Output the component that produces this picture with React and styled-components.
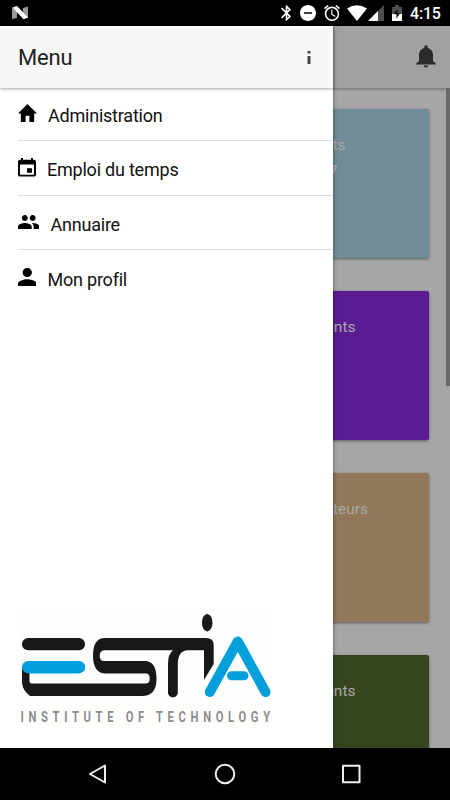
import styled, { createGlobalStyle } from 'styled-components';

const menuItems = [
  {
    label: 'Administration',
    viewBox: '2 3 20 17',
    width: 19,
    height: 18,
    path: 'M10 20v-6h4v6h5v-8h3L12 3 2 12h3v8z',
  },
  {
    label: 'Emploi du temps',
    viewBox: '3 1 18 20',
    width: 18,
    height: 18.5,
    path: 'M17 12h-5v5h5v-5zM16 1v2H8V1H6v2H5c-1.11 0-1.99.9-1.99 2L3 19a2 2 0 002 2h14c1.1 0 2-.9 2-2V5c0-1.1-.9-2-2-2h-1V1h-2zm3 18H5V8h14v11z',
  },
  {
    label: 'Annuaire',
    viewBox: '1 5 22 14',
    width: 21.5,
    height: 14,
    path: 'M16 11c1.66 0 2.99-1.34 2.99-3S17.66 5 16 5c-1.66 0-3 1.34-3 3s1.34 3 3 3zm-8 0c1.66 0 2.99-1.34 2.99-3S9.66 5 8 5C6.34 5 5 6.34 5 8s1.34 3 3 3zm0 2c-2.33 0-7 1.17-7 3.5V19h14v-2.5c0-2.33-4.67-3.5-7-3.5zm8 0c-.29 0-.62.02-.97.05 1.16.84 1.97 1.97 1.97 3.45V19h6v-2.5c0-2.33-4.67-3.5-7-3.5z',
  },
  {
    label: 'Mon profil',
    viewBox: '4 4 16 16',
    width: 18.5,
    height: 18,
    path: 'M12 12c2.21 0 4-1.79 4-4s-1.79-4-4-4-4 1.79-4 4 1.79 4 4 4zm0 2c-2.67 0-8 1.34-8 4v2h16v-2c0-2.66-5.33-4-8-4z',
  },
];

const cards = [
  { title: 'ts', count: '7', color: '#add8e6', inset: 83 },
  { title: 'ants', color: '#8a2be2', inset: 73 },
  { title: 'teurs', color: '#deb887', inset: 60.5 },
  { title: 'ents', color: '#556b2f', inset: 73 },
];

export default function App() {
  return (
    <>
      <GlobalStyle />
      <Phone>
        <StatusBar />
        <Screen>
          <Page>
            <PageHeader>
              <BellIcon />
            </PageHeader>
            <CardList>
              {cards.map((card) => (
                <Card key={card.title} $color={card.color} $inset={card.inset}>
                  <CardTitle>{card.title}</CardTitle>
                  {card.count && <CardCount>{card.count}</CardCount>}
                </Card>
              ))}
            </CardList>
          </Page>
          <Scrim />
          <ScrollThumb />
          <Drawer>
            <DrawerHeader>
              <DrawerTitle>Menu</DrawerTitle>
              <svg width="4" height="13" viewBox="0 0 4 13" fill="#444">
                <path d="M.5 0h3v2.5h-3zM.5 5h3v8h-3z" />
              </svg>
            </DrawerHeader>
            <MenuList>
              {menuItems.map((item) => (
                <MenuItem key={item.label}>
                  <MenuIcon
                    viewBox={item.viewBox}
                    width={item.width}
                    height={item.height}
                    preserveAspectRatio="none"
                  >
                    <path d={item.path} />
                  </MenuIcon>
                  <MenuLabel>{item.label}</MenuLabel>
                </MenuItem>
              ))}
            </MenuList>
            <EstiaLogo />
          </Drawer>
        </Screen>
        <NavigationBar />
      </Phone>
    </>
  );
}

function StatusBar() {
  return (
    <StatusRow>
      <svg width="17" height="14" viewBox="0 0 17 14">
        <path d="M0 1.5L5 5v7L0 13z" fill="#999" />
        <path d="M11 2l5-1.5v12L11 8z" fill="#999" />
        <path d="M.5 1.5L5 0l11 11.5-4.500 1.800z" fill="#fff" />
      </svg>
      <StatusIcons>
        <svg width="10" height="16" viewBox="5 2 12.7 20" fill="#fff">
          <path d="M17.71 7.71L12 2h-1v7.59L6.41 5 5 6.41 10.59 12 5 17.59 6.41 19 11 14.41V22h1l5.71-5.71-4.3-4.29 4.3-4.29zM13 5.83l1.88 1.88L13 9.59V5.83zm1.88 10.46L13 18.17v-3.76l1.88 1.88z" />
        </svg>
        <svg width="16" height="16" viewBox="2 2 20 20" fill="#fff">
          <path d="M12 2C6.48 2 2 6.48 2 12s4.48 10 10 10 10-4.48 10-10S17.52 2 12 2zm5 11H7v-2h10v2z" />
        </svg>
        <svg width="16" height="16" viewBox="2 2 20 20" fill="#fff">
          <path d="M22 5.72l-4.6-3.86-1.29 1.53 4.6 3.86L22 5.72zM7.88 3.39L6.6 1.86 2 5.71l1.29 1.53 4.59-3.85zM12.5 8H11v6l4.75 2.85.75-1.23-4-2.37V8zM12 4c-4.97 0-9 4.03-9 9s4.02 9 9 9a9 9 0 000-18zm0 16c-3.87 0-7-3.13-7-7s3.13-7 7-7 7 3.13 7 7-3.13 7-7 7z" />
        </svg>
        <svg width="20" height="16" viewBox="0 0 20 16">
          <path d="M0 3.5Q10-3 20 3.5L10 16z" fill="#fff" />
        </svg>
        <svg width="16" height="16" viewBox="0 0 16 16">
          <path d="M16 0v16H0z" fill="#4d4d4d" />
          <path d="M10 6v10H0z" fill="#fff" />
        </svg>
        <svg width="10" height="16" viewBox="0 0 10 16">
          <path d="M0 2h3V0h4v2h3v8H0z" fill="#4d4d4d" />
          <path d="M0 9h10v7H0z" fill="#fff" />
          <path d="M5.5 4v4H8l-3.500 5.500V9.300H2z" fill="#000" />
        </svg>
      </StatusIcons>
      <Clock>4:15</Clock>
    </StatusRow>
  );
}

function BellIcon() {
  return (
    <svg width="20" height="23" viewBox="0 0 20 23" fill="#424242">
      <path d="M8.3 3V2a1.7 1.7 0 013.4 0v1C15.5 4 17 7 17 10.5V16l3 2.8v.7H0v-.7L3 16v-5.5C3 7 4.5 4 8.3 3z" />
      <path d="M7.7 20.5h4.6a2.3 2 0 01-4.6 0z" />
    </svg>
  );
}

function EstiaLogo() {
  return (
    <Logo viewBox="20 612 254 114" width="254" height="114">
      <rect x="20" y="612" width="252" height="114" fill="#fefefc" />
      <g fill="#181818">
        <rect x="22" y="638" width="63" height="12.3" rx="6.1" />
        <path d="M22 667V683Q23 691 30 696H142Q156.500 696 156.500 679Q156.500 661 145 661H104Q99.700 661 99.700 656T104 650.300H173Q168 654 168 664V692.500A4.900 4.900 0 00177.800 692.500V665Q177.800 650.300 188 650.300H204V680L213.700 664V645Q213.700 638 206 638H105Q93 638 93 655.500Q93 673.500 106 673.500H146Q149.700 673.500 149.700 678.500T146 683.500H32Q29.500 683.500 29.500 681V667Z" />
        <ellipse cx="207.2" cy="622.7" rx="5.3" ry="8.7" />
      </g>
      <g
        fill="none"
        stroke="#029fdb"
        strokeLinecap="round"
        strokeLinejoin="round"
      >
        <path d="M28.2 667.2H79" strokeWidth="12.4" />
        <path d="M209.8 692L237.8 641.5 265.5 692" strokeWidth="10" />
        <path d="M231.5 675.7H244" strokeWidth="9" />
      </g>
      <LogoText
        transform="translate(20.5 722) scale(0.8 1)"
        textLength="312"
      >
        INSTITUTE OF TECHNOLOGY
      </LogoText>
    </Logo>
  );
}

function NavigationBar() {
  return (
    <NavRow>
      <svg width="20" height="22" viewBox="0 0 20 22">
        <path d="M17 2.5v17L2 11z" />
      </svg>
      <svg width="22" height="22" viewBox="0 0 22 22">
        <circle cx="11" cy="11" r="9.3" />
      </svg>
      <svg width="20" height="22" viewBox="0 0 20 22">
        <rect x="2" y="2.8" width="16.5" height="16.5" />
      </svg>
    </NavRow>
  );
}

const GlobalStyle = createGlobalStyle`
  * {
    box-sizing: border-box;
  }
  body {
    margin: 0;
    font-family: Roboto, sans-serif;
  }
  svg {
    display: block;
    flex-shrink: 0;
  }
`;

const Phone = styled.div`
  display: flex;
  flex-direction: column;
  width: 450px;
  height: 800px;
  overflow: hidden;
  background: #000;
`;

const StatusRow = styled.header`
  display: flex;
  align-items: center;
  height: 26px;
  padding: 0 10px 0 12px;
  color: #fff;
`;

const StatusIcons = styled.div`
  display: flex;
  align-items: center;
  gap: 8px;
  margin-left: auto;

  svg:nth-child(2) {
    margin-left: 1px;
  }
  svg:nth-child(3) {
    margin-right: -1px;
  }
  svg:nth-child(4) {
    margin-right: -7px;
  }
`;

const Clock = styled.span`
  margin-left: 8px;
  width: 30px;
  font-size: 16px;
  font-weight: 500;
  letter-spacing: -0.2px;
  line-height: 26px;
  padding-top: 2px;
  white-space: nowrap;
`;

const Screen = styled.main`
  position: relative;
  height: 722px;
  overflow: hidden;
  background: #fff;
`;

const Page = styled.section`
  height: 100%;
`;

const PageHeader = styled.div`
  display: flex;
  align-items: center;
  justify-content: flex-end;
  height: 62px;
  padding: 0 14px 2px 0;
  background: #f8f8f8;
  box-shadow: 0 1px 3px rgba(0, 0, 0, 0.35);
`;

const CardList = styled.div`
  display: flex;
  flex-direction: column;
  gap: 33px;
  padding: 21.4px 21.5px 0;
`;

const Card = styled.article`
  display: flex;
  flex-direction: column;
  align-items: flex-end;
  flex-shrink: 0;
  height: 148.8px;
  padding: 26px ${({ $inset }) => $inset}px 0 0;
  border-radius: 2px;
  background: ${({ $color }) => $color};
  box-shadow: 0 1px 3px rgba(0, 0, 0, 0.45);
  color: #fff;
`;

const CardTitle = styled.span`
  font-size: 15.5px;
  line-height: 20px;
`;

const CardCount = styled.strong`
  margin: 6px 8px 0 0;
  font-size: 16px;
  line-height: 22px;
`;

const Scrim = styled.div`
  position: absolute;
  inset: 0;
  background: rgba(0, 0, 0, 0.35);
`;

const ScrollThumb = styled.div`
  position: absolute;
  top: 62px;
  right: 0;
  width: 4px;
  height: 298px;
  background: #696969;
`;

const Drawer = styled.aside`
  position: absolute;
  inset: 0 auto 0 0;
  display: flex;
  flex-direction: column;
  width: 332.6px;
  background: #fff;
  box-shadow: 0 0 4px rgba(0, 0, 0, 0.5);
`;

const DrawerHeader = styled.div`
  display: flex;
  align-items: center;
  justify-content: space-between;
  height: 62px;
  padding: 0 22px 0 18px;
  background: #f8f8f8;
  box-shadow: 0 1px 3px rgba(0, 0, 0, 0.35);
`;

const DrawerTitle = styled.h1`
  margin: 0;
  color: #222;
  font-size: 22px;
  font-weight: 400;
  letter-spacing: -0.2px;
`;

const MenuList = styled.ul`
  margin: 0;
  padding: 0 0 0 17.5px;
  list-style: none;
`;

const MenuItem = styled.li`
  display: flex;
  align-items: center;
  height: 54.5px;
  border-bottom: 1px solid #dedede;

  &:first-child {
    height: 53px;
    padding-bottom: 2px;
  }
  &:last-child {
    border-bottom: 0;
  }
`;

const MenuIcon = styled.svg`
  margin-right: 11.5px;
  margin-bottom: 1px;
`;

const MenuLabel = styled.span`
  padding-top: 4px;
  color: #111;
  font-size: 18px;
  letter-spacing: -0.22px;
`;

const Logo = styled.svg`
  margin: auto 0 22px 20px;
`;

const LogoText = styled.text`
  fill: #8c8c8c;
  font-family: Roboto, sans-serif;
  font-size: 14px;
  font-weight: 700;
`;

const NavRow = styled.nav`
  display: flex;
  align-items: center;
  justify-content: space-between;
  height: 52px;
  padding: 0 89px 0 88px;

  svg {
    fill: none;
    stroke: #eee;
    stroke-width: 2;
    stroke-linejoin: round;
  }
`;
